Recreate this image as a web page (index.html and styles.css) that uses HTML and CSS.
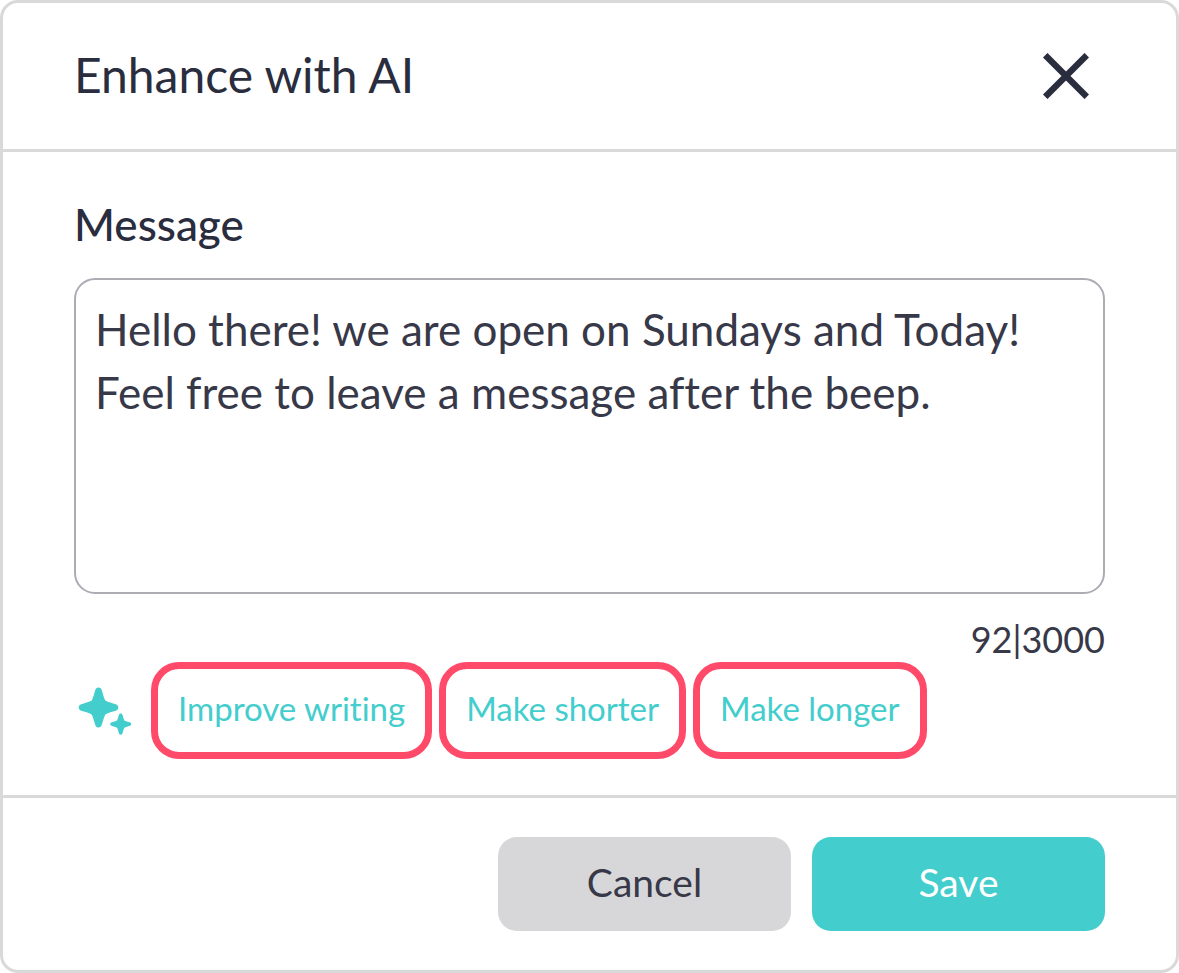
FILE: index.html
```html
<!DOCTYPE html>
<html lang="en">
<head>
<meta charset="utf-8">
<meta name="viewport" content="width=device-width, initial-scale=1">
<title>Enhance with AI</title>
<link rel="stylesheet" href="styles.css">
</head>
<body>
<form class="dialog" role="dialog" aria-labelledby="dialog-title">
  <header class="dialog-header">
    <h1 class="dialog-title" id="dialog-title">Enhance with AI</h1>
    <button class="close" type="button" aria-label="Close">
      <svg class="close-icon" viewBox="0 0 46 46" aria-hidden="true"><path d="M2.200 2.200 43.800 43.800M43.800 2.200 2.200 43.800" fill="none" stroke="currentColor" stroke-width="6.400"/></svg>
    </button>
  </header>
  <main class="dialog-body">
    <label class="label" for="message">Message</label>
    <textarea class="message" id="message" rows="4" maxlength="3000">Hello there! we are open on Sundays and Today!
Feel free to leave a message after the beep.</textarea>
    <p class="counter">92|3000</p>
    <div class="suggestions">
      <svg class="sparkle" viewBox="0 0 54 48" aria-hidden="true">
        <path fill="currentColor" d="M20.500 0.500C22.300 0.500 23.300 1.700 23.800 3.300C25 7 25.700 10.500 27.300 13.600C30.400 15.400 34.500 16.200 37.800 17.300C39.300 17.800 40.300 18.900 40.300 20.500C40.300 22.100 39.300 23.200 37.800 23.700C34.500 24.800 30.400 25.600 27.300 27.400C25.700 30.500 25 34 23.800 37.700C23.300 39.300 22.300 40.500 20.500 40.500C18.700 40.500 17.700 39.300 17.200 37.700C16 34 15.300 30.500 13.700 27.400C10.600 25.600 6.500 24.800 3.200 23.700C1.700 23.200 0.700 22.100 0.700 20.500C0.700 18.900 1.700 17.800 3.200 17.300C6.500 16.200 10.600 15.400 13.700 13.600C15.300 10.500 16 7 17.200 3.300C17.700 1.700 18.700 0.500 20.500 0.500Z"/>
        <path fill="currentColor" d="M42.700 26.500C43.700 26.500 44.300 27.200 44.600 28.100C45.200 29.900 45.500 31.700 46.300 33.400C48 34.300 50 34.700 51.600 35.200C52.600 35.600 53.200 36.200 53.200 37.100C53.200 38 52.600 38.600 51.600 39C50 39.500 48 39.900 46.300 40.800C45.500 42.500 45.200 44.300 44.600 46.100C44.300 47 43.700 47.700 42.700 47.700C41.700 47.700 41.100 47 40.800 46.100C40.200 44.300 39.900 42.500 39.100 40.800C37.400 39.900 35.400 39.500 33.800 39C32.800 38.600 32.200 38 32.200 37.100C32.200 36.200 32.800 35.600 33.800 35.200C35.400 34.700 37.400 34.300 39.100 33.400C39.900 31.700 40.200 29.900 40.800 28.100C41.100 27.200 41.700 26.500 42.700 26.500Z"/>
      </svg>
      <button class="chip" type="button">Improve writing</button>
      <button class="chip" type="button">Make shorter</button>
      <button class="chip" type="button">Make longer</button>
    </div>
  </main>
  <footer class="dialog-footer">
    <button class="action action-cancel" type="button">Cancel</button>
    <button class="action action-save" type="submit">Save</button>
  </footer>
</form>
</body>
</html>
```
FILE: styles.css
```css
* {
  box-sizing: border-box;
}

body {
  margin: 0;
  background: #fff;
  color: #292d3e;
  font-family: Lato, "Open Sans", sans-serif;
  font-variant-ligatures: none;
}

button,
textarea {
  font: inherit;
  font-variant-ligatures: none;
  color: inherit;
}

button {
  cursor: pointer;
}

.dialog {
  display: flex;
  flex-direction: column;
  min-height: 100vh;
  border: 3px solid #d9d9da;
  border-radius: 18px;
}

.dialog-header {
  display: flex;
  align-items: center;
  justify-content: space-between;
  padding: 45px 87px 45px 71px;
  border-bottom: 3px solid #d9d9da;
}

.dialog-title {
  margin: 0;
  padding-bottom: 2px;
  font-size: 48px;
  font-weight: 400;
  line-height: 54px;
}

.close {
  display: flex;
  padding: 0;
  border: 0;
  background: none;
}

.close-icon {
  width: 46px;
  height: 46px;
}

.dialog-body {
  display: flex;
  flex: 1;
  flex-direction: column;
  padding: 46px 71px 36px;
}

.label {
  font-size: 44px;
  font-weight: 500;
  line-height: 52px;
}

.message {
  display: block;
  width: 100%;
  margin-top: 28px;
  padding: 18px 19px 42px;
  border: 2px solid #acacb5;
  border-radius: 21px;
  outline: 0;
  background: #fff;
  color: #373848;
  font-size: 44px;
  line-height: 63px;
  resize: none;
}

.counter {
  margin: 23px 0 0;
  color: #373848;
  font-size: 36px;
  line-height: 45px;
  text-align: right;
}

.suggestions {
  display: flex;
  align-items: center;
  gap: 7px;
}

.sparkle {
  width: 54px;
  height: 48px;
  margin: 0 12px 0 4px;
  color: #43cdcd;
}

.chip {
  padding: 18px 20px 23px;
  border: 7px solid #ff4a69;
  border-radius: 28px;
  background: #fff;
  color: #43cdcd;
  font-size: 33px;
  line-height: 42px;
}

.dialog-footer {
  display: flex;
  justify-content: flex-end;
  gap: 21px;
  padding: 39px 71px;
  border-top: 3px solid #d9d9da;
}

.action {
  width: 293px;
  padding: 23px 20px 27px;
  border: 0;
  border-radius: 19px;
  font-size: 39px;
  line-height: 44px;
}

.action-cancel {
  background: #d7d7d9;
  color: #373848;
}

.action-save {
  background: #43cdcd;
  color: #fff;
}
```
